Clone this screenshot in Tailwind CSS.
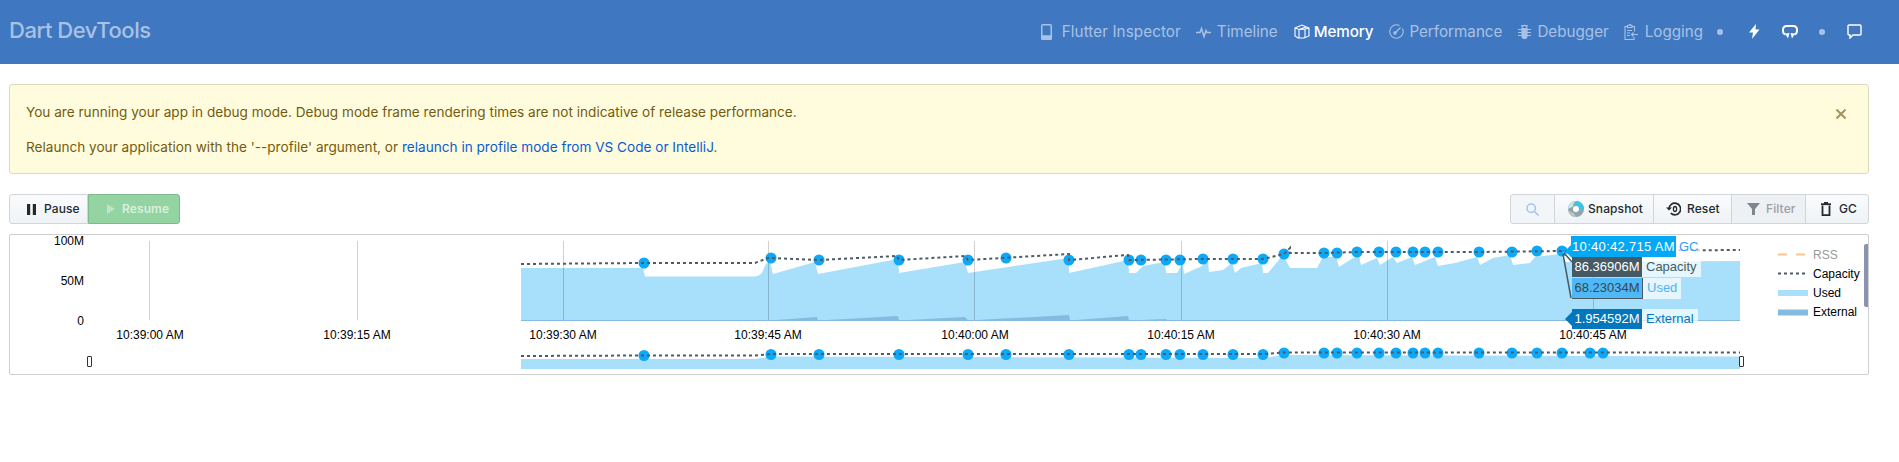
<!DOCTYPE html>
<html lang="en">
<head>
    <meta charset="UTF-8">
    <meta name="viewport" content="width=device-width, initial-scale=1.0">
    <title>Dart DevTools</title>
    <script src="https://cdn.jsdelivr.net/npm/@tailwindcss/browser@4"></script>
</head>
<body class="bg-white font-['Inter','Liberation_Sans',sans-serif] text-[14px] text-[#24292e] h-[462px] overflow-hidden">
    <header class="h-16 bg-[#3f78c0] flex items-center justify-between pl-[9px] pr-[37px] text-[#a9c1e5]">
        <div class="text-[22px] font-medium tracking-[-0.45px] -mt-[3px]">Dart DevTools</div>
        <nav class="flex items-center text-[15.2px]">
            <a class="flex items-center gap-[10px]">
                <svg class="w-[11px] h-[16px]" viewBox="0 0 11 16" fill="none" stroke="currentColor" stroke-width="1.5"><rect x=".75" y=".75" width="9.5" height="14.5" rx="1"/><path d="M1 12h9v3H1z" fill="currentColor"/></svg>
                <span class="tracking-[0.1px]">Flutter Inspector</span>
            </a>
            <a class="flex items-center gap-[6px] ml-[15px]">
                <svg class="w-[15px] h-[14px]" viewBox="0 0 15 14" fill="none" stroke="currentColor" stroke-width="1.5"><path d="M0 7.5h4l1.5-4 2.500 8 2-6 1 2h4"/></svg>
                <span>Timeline</span>
            </a>
            <a class="flex items-center gap-[4px] ml-[16px] text-white font-medium">
                <svg class="w-[16px] h-[15px]" viewBox="0 0 16 15" fill="none" stroke="currentColor" stroke-width="1.1"><path d="M1 4l7-3 7 3v8l-5 2H4l-3-2z"/><path d="M1 4l4 1.500 7-2.500M5 5.500V14M11 5v9M5 5.500l6-.5 4-1"/></svg>
                <span class="tracking-[-0.1px]">Memory</span>
            </a>
            <a class="flex items-center gap-[5px] ml-[16px]">
                <svg class="w-[15px] h-[15px]" viewBox="0 0 15 15" fill="none" stroke="currentColor" stroke-width="1.1"><path d="M10.500 1.600A6.700 6.700 0 1 0 13.400 4.500"/><path d="M5.500 9.500l6-6"/><circle cx="6" cy="9" r="1.200" fill="currentColor"/></svg>
                <span>Performance</span>
            </a>
            <a class="flex items-center gap-[6px] ml-[16px]">
                <svg class="w-[13px] h-[15px]" viewBox="0 0 13 15" fill="none" stroke="currentColor" stroke-width="1.2"><path d="M4 4.500h5v7.500a2.500 2.500 0 0 1-5 0z" fill="currentColor"/><path d="M4 3.800a2.500 2.500 0 0 1 5 0M3.500 1l1.500 2M9.500 1L8 3M0 5.500h4M13 5.500H9M0 8.500h4M13 8.500H9M0 11.500h4M13 11.500H9M6.500 5v9"/></svg>
                <span>Debugger</span>
            </a>
            <a class="flex items-center gap-[7px] ml-[15px]">
                <svg class="w-[14px] h-[16px]" viewBox="0 0 14 16" fill="none" stroke="currentColor" stroke-width="1.1"><path d="M3.500 2.500H1v13h9v-2.500M8 2.500h2.500v5"/><path d="M3.500 3.500V1.500h1.500a1 1 0 0 1 2 0H8v2z"/><path d="M3 6.500h5M3 9h3M3 11.500h3M14 10.500H7.500M9.500 8.500l-2 2 2 2"/></svg>
                <span>Logging</span>
            </a>
            <span class="w-[6px] h-[6px] rounded-full bg-[#a9c1e5] ml-[14px]"></span>
            <svg class="w-[11px] h-[15px] ml-[26px] text-white" viewBox="0 0 11 15" fill="currentColor"><path d="M7 0L0 8.500h4L3 15l7.500-9.500H6.500z"/></svg>
            <svg class="w-[16px] h-[15px] ml-[22px] text-white" viewBox="0 0 16 15" fill="none" stroke="currentColor" stroke-width="2"><path d="M3.500 10.500C1.800 10 1 9 1 7V5.500A3.500 3.500 0 0 1 4.500 2h7A3.500 3.500 0 0 1 15 5.500V7c0 2-.8 3-2.500 3.500"/><path d="M7.500 9L3 9.500l3 5zM8.500 9l4.500.5-3 5z" fill="currentColor" stroke="none"/></svg>
            <span class="w-[6px] h-[6px] rounded-full bg-[#a9c1e5] ml-[21px]"></span>
            <svg class="w-[15px] h-[15px] ml-[22px] text-white" viewBox="0 0 15 15" fill="none" stroke="currentColor" stroke-width="1.4"><path d="M2 1h11a1 1 0 0 1 1 1v8a1 1 0 0 1-1 1H6l-3 3v-3H2a1 1 0 0 1-1-1V2a1 1 0 0 1 1-1z"/></svg>
        </nav>
    </header>

    <main class="w-[1860px] ml-[9px] pt-5">
        <div class="relative h-[90px] bg-[#fffbdd] border border-[#dfd9c0] rounded-[3px] px-4 pt-[17px] text-[13.6px] text-[#735c0f] leading-[21px]">
            <p class="mb-[14px]">You are running your app in debug mode. Debug mode frame rendering times are not indicative of release performance.</p>
            <p>Relaunch your application with the '--profile' argument, or <a class="text-[#0a5bd3]">relaunch in profile mode from VS Code or IntelliJ</a>.</p>
            <svg class="absolute right-[22px] top-[24px] w-[10px] h-[10px]" viewBox="0 0 10 10" stroke="#a5925d" stroke-width="2"><path d="M.5.5l9 9M9.500.5l-9 9"/></svg>
        </div>

        <div class="flex justify-between mt-5 h-[30px] text-[12px] font-medium tracking-[0.1px]">
            <div class="flex">
                <button class="w-[79px] flex items-center pl-[17px] gap-[8px] bg-linear-to-b from-[#fafbfc] to-[#eff3f6] border border-[#d1d5da] rounded-l-[3px]">
                    <svg class="w-[9px] h-[11px]" viewBox="0 0 9 11" fill="#24292e"><path d="M0 0h3.200v11H0zM5.800 0H9v11H5.800z"/></svg>
                    <span>Pause</span>
                </button>
                <button class="w-[92px] flex items-center pl-[18px] gap-[7px] bg-[#94d3a2] border border-[#7dbb8e] rounded-r-[3px] text-[#d9f0de] font-semibold">
                    <svg class="w-[8px] h-[10px]" viewBox="0 0 8 10" fill="#bfe4c8"><path d="M0 0l8 5-8 5z"/></svg>
                    <span>Resume</span>
                </button>
            </div>
            <div class="flex">
                <button class="w-[45px] flex items-center justify-center bg-[#f3f6f9] border border-[#d1d5da] rounded-l-[3px]">
                    <svg class="w-[13px] h-[13px]" viewBox="0 0 13 13" fill="none" stroke="#a6c4f0" stroke-width="1.6"><circle cx="5.200" cy="5.200" r="4.200"/><path d="M8.200 8.200l4.300 4.300"/></svg>
                </button>
                <button class="w-[100px] -ml-px flex items-center pl-[13px] gap-[4px] bg-linear-to-b from-[#fafbfc] to-[#eff3f6] border border-[#d1d5da]">
                    <svg class="w-[16px] h-[16px]" viewBox="0 0 16 16"><circle cx="8" cy="8" r="8" fill="#8fa6ab"/><path d="M8 0a8 8 0 0 1 8 8H10.500A2.500 2.500 0 0 0 8 5.500z" fill="#3cc4e6"/><path d="M0 8a8 8 0 0 1 8-8c-2 1-3 3-3 5.500z" fill="#bfe8f0"/><path d="M8 16a8 8 0 0 1-8-8c1 2 3 4 5.500 3.500z" fill="#b9c4c6"/><circle cx="8" cy="8" r="3" fill="#fff"/></svg>
                    <span>Snapshot</span>
                </button>
                <button class="w-[79px] -ml-px flex items-center pl-[12px] gap-[6px] bg-linear-to-b from-[#fafbfc] to-[#eff3f6] border border-[#d1d5da]">
                    <svg class="w-[15px] h-[14px]" viewBox="0 0 15 14" fill="none" stroke="#24292e" stroke-width="1.700"><path d="M3 7a5.800 5.800 0 1 1 1.800 4.200"/><path d="M0 5.500l3 3 3-3" fill="#24292e" stroke="none"/><ellipse cx="9" cy="7" rx="1.600" ry="2.500" stroke-width="1.300"/></svg>
                    <span>Reset</span>
                </button>
                <button class="w-[75px] -ml-px flex items-center pl-[15px] gap-[6px] bg-[#eef1f4] border border-[#d1d5da] text-[#9aa0a6]">
                    <svg class="w-[13px] h-[12px]" viewBox="0 0 13 12" fill="#7f868c"><path d="M0 0h13L8 6v6H5V6z"/></svg>
                    <span>Filter</span>
                </button>
                <button class="w-[64px] -ml-px flex items-center pl-[15px] gap-[8px] bg-linear-to-b from-[#fafbfc] to-[#eff3f6] border border-[#d1d5da] rounded-r-[3px]">
                    <svg class="w-[10px] h-[14px]" viewBox="0 0 10 14" fill="none" stroke="#24292e" stroke-width="1.800"><path d="M1.500 3.500v9.600h7V3.500"/><path d="M0 2.200h10"/><path d="M3 .900h4"/></svg>
                    <span>GC</span>
                </button>
            </div>
        </div>

        <div class="relative mt-[10px] h-[141px] border border-[#cfcfcf] rounded-[2px] font-['Liberation_Sans',Arial,sans-serif]">
            <svg id="chart" class="absolute inset-0 w-[1858px] h-[139px]" viewBox="10 235 1858 139" font-size="12" fill="#000">
                <path fill="#a8dffb" d="M521 320V268H643L645 276.500H755Q762 276 764 268Q766 262 770 262L773 274L815 262L818 274L898 259L899 273L965 262L968 273L1069 258V273L1128 260L1129 273H1136L1143 266L1165 262L1166 273H1177L1183 263L1184 274L1200 267L1208 262L1209 272L1223 270L1232 263L1235 273L1241 268L1262 263L1263 273H1268L1283 255L1290 268H1317L1323 257H1336L1339 267L1353 258L1359 256L1361 265L1377 258L1380 265L1393 257L1397 263L1412 257L1415 265L1435 257L1438 266L1455 263L1477 257L1480 265L1493 258L1510 255L1513 265L1530 263L1535 257L1560 254L1566 262L1740 261V320Z"/>
                <path fill="#85bbdf" d="M770 320.500L817 317L818 320.500L898 316L899 320.500L965 317L968 320.500L1069 315L1070 320.500L1128 316L1129 320.500L1166 319L1167 320.500H1740V321H770Z"/>
                <path stroke="#85bbdf" d="M521 320.500H1740"/>
                <path stroke="#000" stroke-opacity=".18" d="M149.500 241V320M357.500 241V320M563.500 241V320M768.500 241V320M974.500 241V320M1181.500 241V320M1387.500 241V320M1593.500 241V320"/>
                <g id="points" fill="#0da8f8"></g>
                <path id="capacity" fill="none" stroke="#4f5b66" stroke-width="2" stroke-dasharray="3 3" d="M521 264L644 263H755L768 258H771L819 260L897 256L899 260L965 256L968 260L1069 254V260L1128 255L1129 260L1203 259L1263 259L1284 254L1290 248V253L1324 253L1357 252H1479L1562 251L1740 250"/>

                <path fill="#a8dffb" d="M521 369V359H755L771 356.500L1263 358L1284 355L1740 356.500V369Z"/>
                <g id="overviewPoints" fill="#0da8f8"></g>
                <path fill="none" stroke="#4f5b66" stroke-width="2" stroke-dasharray="3 3" d="M521 356L644 355.500H755L771 354L1263 354L1284 352.500L1740 352.500"/>
                <rect x="87.500" y="356.500" width="4" height="10" rx=".5" fill="#fff" stroke="#333"/>
                <rect x="1739.500" y="356.500" width="4" height="10" rx=".5" fill="#fff" stroke="#333"/>

                <g text-anchor="end">
                    <text x="84" y="245">100M</text>
                    <text x="84" y="285">50M</text>
                    <text x="84" y="325">0</text>
                </g>
                <g text-anchor="middle">
                    <text x="150" y="339">10:39:00 AM</text>
                    <text x="357" y="339">10:39:15 AM</text>
                    <text x="563" y="339">10:39:30 AM</text>
                    <text x="768" y="339">10:39:45 AM</text>
                    <text x="975" y="339">10:40:00 AM</text>
                    <text x="1181" y="339">10:40:15 AM</text>
                    <text x="1387" y="339">10:40:30 AM</text>
                    <text x="1593" y="339">10:40:45 AM</text>
                </g>

                <path d="M1563 252L1572 263V258z" fill="#fff"/>
                <path d="M1564 253L1572 262M1563 254L1571 298" stroke="#455a64" stroke-width="1.500" fill="none"/>

                <path d="M1778 254.500H1787M1796 254.500H1805" stroke="#f9c48f" stroke-width="2"/>
                <path d="M1778 273.500H1805" stroke="#4f5b66" stroke-width="2" stroke-dasharray="3 3"/>
                <path d="M1778 293H1808" stroke="#a8dffb" stroke-width="6"/>
                <path d="M1778 312.500H1808" stroke="#85bbdf" stroke-width="6"/>
                <text x="1813" y="259" fill="#999">RSS</text>
                <text x="1813" y="278">Capacity</text>
                <text x="1813" y="297">Used</text>
                <text x="1813" y="316">External</text>
            </svg>

            <!-- hover tooltips sit over the chart -->
            <div class="absolute left-[1555px] top-[1px] h-[21px] flex items-center text-[13px]">
                <span class="w-0 h-0 border-y-[7px] border-y-transparent border-r-[7px] border-r-[#03a9f4] mt-[8px] -mr-px"></span>
                <span class="h-[21px] w-[105px] bg-[#03a9f4] text-white leading-[21px] text-center tracking-[0.3px]">10:40:42.715 AM</span>
                <span class="h-[21px] pl-[3px] pr-[3px] bg-white/70 text-[#2f9df4] leading-[21px]">GC</span>
            </div>
            <div class="absolute left-[1562px] top-[22px] h-[20px] flex items-center text-[13px]">
                <span class="h-[20px] w-[70px] bg-[#455a64] text-white leading-[20px] text-center">86.36906M</span>
                <span class="h-[20px] px-[4px] bg-white/70 text-[#455a64] leading-[20px]">Capacity</span>
            </div>
            <div class="absolute left-[1562px] top-[43px] h-[21px] flex items-center text-[13px]">
                <span class="h-[21px] w-[71px] bg-[#4fb9f7] border-b border-r border-[#455a64] text-[#37474f] leading-[20px] text-center">68.23034M</span>
                <span class="h-[21px] px-[4px] bg-white/70 text-[#4fb3f6] leading-[20px]">Used</span>
            </div>
            <div class="absolute left-[1555px] top-[74px] h-[20px] flex items-center text-[13px]">
                <span class="w-0 h-0 border-y-[7px] border-y-transparent border-r-[7px] border-r-[#0277bd]"></span>
                <span class="h-[20px] w-[70px] bg-[#0277bd] text-white leading-[20px] text-center">1.954592M</span>
                <span class="h-[20px] px-[4px] bg-white/70 text-[#0277bd] leading-[20px]">External</span>
            </div>
            <div class="absolute right-0 top-[9px] w-[4px] h-[63px] bg-[#8a94ae] rounded-l-[2px]"></div>
        </div>
    </main>

    <script>
        const gcEvents = [[644,263],[771,258],[819,260],[899,260],[968,260],[1006,258],[1069,260],[1129,260],[1141,260],[1166,260],[1180,260],[1203,259],[1233,259],[1263,259],[1284,254],[1324,253],[1337,253],[1357,252],[1379,252],[1396,252],[1413,252],[1425,252],[1438,252],[1479,252],[1512,252],[1537,251],[1562,251]];
        const overviewY = x => x < 700 ? 355.5 : x < 1270 ? 354.5 : 353;

        function addDot(group, x, y) {
            const dot = document.createElementNS('http://www.w3.org/2000/svg', 'circle');
            dot.setAttribute('cx', x);
            dot.setAttribute('cy', y);
            dot.setAttribute('r', 5.5);
            group.appendChild(dot);
        }

        gcEvents.forEach(([x, y]) => addDot(document.getElementById('points'), x, y));
        [...gcEvents.map(p => p[0]), 1590, 1603].forEach(x => addDot(document.getElementById('overviewPoints'), x, overviewY(x)));
    </script>
</body>
</html>
